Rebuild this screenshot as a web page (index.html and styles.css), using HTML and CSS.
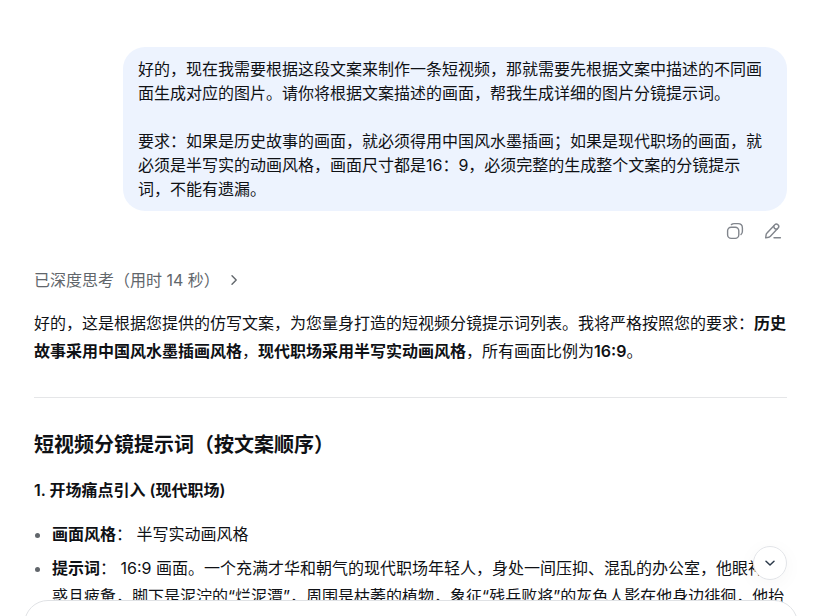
FILE: index.html
```html
<!DOCTYPE html>
<html lang="zh-CN">
<head>
  <meta charset="UTF-8">
  <meta name="viewport" content="width=device-width, initial-scale=1.0">
  <title>短视频分镜提示词</title>
  <link rel="stylesheet" href="styles.css">
</head>
<body>
  <main class="chat">
    <section class="user-message">
      <div class="bubble">好的，现在我需要根据这段文案来制作一条短视频，那就需要先根据文案中描述的不同画面生成对应的图片。请你将根据文案描述的画面，帮我生成详细的图片分镜提示词。

要求：如果是历史故事的画面，就必须得用中国风水墨插画；如果是现代职场的画面，就必须是半写实的动画风格，画面尺寸都是16：9，必须完整的生成整个文案的分镜提示词，不能有遗漏。</div>
      <div class="actions">
        <button class="icon-btn" type="button" aria-label="复制">
          <svg width="18" height="18" viewBox="0 0 18 18" fill="none" stroke="currentColor" stroke-width="1.4" stroke-linecap="round">
            <rect x="1.6" y="5.2" width="11.2" height="11.2" rx="3.6"/>
            <path d="M5.4 2.6C6.2 1.9 7.1 1.6 8.2 1.6H12C14.8 1.6 16.4 3.2 16.4 6V9.2C16.4 10.7 15.9 11.8 15 12.6"/>
          </svg>
        </button>
        <button class="icon-btn" type="button" aria-label="编辑">
          <svg width="18" height="18" viewBox="0 0 18 18" fill="none" stroke="currentColor" stroke-width="1.4" stroke-linecap="round" stroke-linejoin="round">
            <path d="M10.6 2.9C11.6 1.8 13 1.8 14 2.7C15 3.6 15 5 14.1 6.1L6.2 14.4C5.8 14.9 5.3 15.1 4.7 15.3L1.7 15.9L2.1 12.8C2.2 12.2 2.4 11.7 2.8 11.3Z"/>
            <path d="M9.7 4.2C9.8 6.2 11 7.2 13 7.2M10 15.8H16.4"/>
          </svg>
        </button>
      </div>
    </section>

    <section class="answer">
      <button class="thinking" type="button">
        <span>已深度思考（用时 14 秒）</span>
        <svg width="12" height="12" viewBox="0 0 12 12" fill="none" stroke="currentColor" stroke-width="1.4" stroke-linecap="round" stroke-linejoin="round">
          <path d="M4 1.8L8.2 6L4 10.2"/>
        </svg>
      </button>
      <p>好的，这是根据您提供的仿写文案，为您量身打造的短视频分镜提示词列表。我将严格按照您的要求：<strong>历史故事采用中国风水墨插画风格</strong>，<strong>现代职场采用半写实动画风格</strong>，所有画面比例为<strong>16:9</strong>。</p>
      <hr>
      <h3>短视频分镜提示词（按文案顺序）</h3>
      <h4>1. 开场痛点引入 (现代职场)</h4>
      <ul>
        <li><strong>画面风格</strong>： 半写实动画风格</li>
        <li><strong>提示词</strong>： 16:9 画面。一个充满才华和朝气的现代职场年轻人，身处一间压抑、混乱的办公室，他眼神困惑且疲惫，脚下是泥泞的“烂泥潭”，周围是枯萎的植物，象征“残兵败将”的灰色人影在他身边徘徊，他抬</li>
      </ul>
    </section>
  </main>

  <button class="scroll-btn" type="button" aria-label="滚动到底部">
    <svg width="12" height="12" viewBox="0 0 12 12" fill="none" stroke="currentColor" stroke-width="1.5" stroke-linecap="round" stroke-linejoin="round">
      <path d="M2 4.2L6 8L10 4.2"/>
    </svg>
  </button>

  <div class="composer">
    <textarea aria-label="输入消息"></textarea>
  </div>
</body>
</html>
```

FILE: styles.css
```css
* {
  box-sizing: border-box;
}
body {
  margin: 0;
  height: 100vh;
  overflow: hidden;
  background: #fff;
  color: #0f1115;
  font-family: Inter, "Noto Sans CJK SC", sans-serif;
  font-size: 16px;
  line-height: 28px;
}
button {
  padding: 0;
  border: none;
  background: none;
  font: inherit;
  cursor: pointer;
}
svg {
  display: block;
}

.chat {
  padding: 47px 47px 0 34px;
}

/* User message */
.user-message {
  display: flex;
  flex-direction: column;
  align-items: flex-end;
}
.bubble {
  max-width: calc(100% - 89px);
  padding: 10px 15px;
  border-radius: 22px;
  background: #edf3fe;
  line-height: 24px;
  white-space: pre-wrap;
}
.actions {
  display: flex;
  gap: 10px;
  margin-top: 6px;
}
.icon-btn {
  display: flex;
  align-items: center;
  justify-content: center;
  width: 28px;
  height: 28px;
  color: #81858c;
}

/* Answer */
.answer {
  margin-top: 21px;
}
.thinking {
  display: flex;
  align-items: center;
  gap: 8px;
  color: #61666b;
}
.answer p {
  margin: 15px 0 0;
}
strong, h3, h4 {
  font-weight: 600;
}
hr {
  height: 1px;
  margin: 32px 0;
  border: none;
  background: #e5e6e8;
}
h3 {
  margin: 0 0 16px;
  font-size: 20px;
  line-height: 30px;
}
h4 {
  margin: 0 0 16px;
  font-size: 16px;
}
ul {
  margin: 0;
  padding-left: 18px;
}
li + li {
  margin-top: 6px;
}
li::marker {
  color: #61666b;
}

/* Overlay controls */
.scroll-btn {
  position: fixed;
  right: 47px;
  bottom: 36px;
  display: flex;
  align-items: center;
  justify-content: center;
  width: 34px;
  height: 34px;
  border: 1px solid #e2e4e8;
  border-radius: 50%;
  background: #fff;
  color: #2c3a4a;
  box-shadow: 0 4px 20px rgba(0, 0, 0, 0.04);
}
.composer {
  position: fixed;
  left: 24px;
  right: 36px;
  bottom: -84px;
  height: 100px;
  padding: 20px;
  border: 1px solid #e0e2e5;
  border-radius: 24px;
  background: #fff;
}
.composer textarea {
  width: 100%;
  height: 100%;
  border: none;
  outline: none;
  resize: none;
  font: inherit;
}
```
